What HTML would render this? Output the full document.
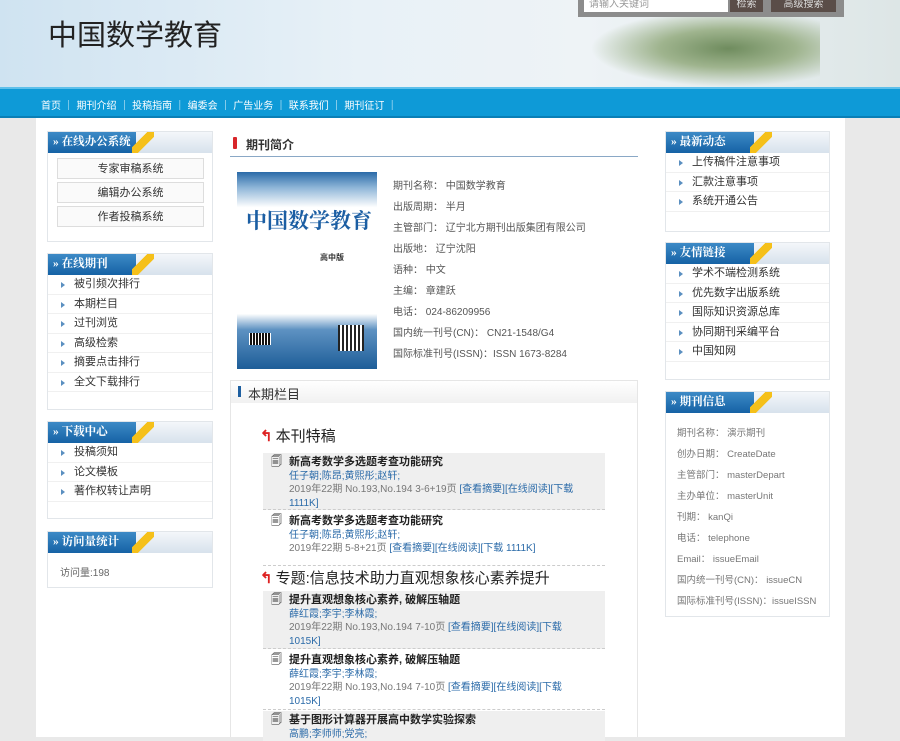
<!DOCTYPE html>
<html><head><meta charset="utf-8"><style>
*{margin:0;padding:0;box-sizing:border-box}
body{width:900px;height:737px;overflow:hidden;background:#e9e9e9;font-family:"Liberation Sans","Noto Sans CJK SC",sans-serif;font-size:11px;color:#555;position:relative}
.a{position:absolute}
#hdr{left:0;top:0;width:900px;height:87px;background:linear-gradient(90deg,#cfe3f1 0%,#e8f1f7 40%,#eef3f6 65%,#dde6e6 100%)}
#tree{left:590px;top:10px;width:230px;height:77px;background:radial-gradient(ellipse at 60% 50%,#6f8c5e 0%,#9fb48e 35%,rgba(220,230,230,0) 70%)}
#nav{left:0;top:87px;width:900px;height:31px;background:#0e9ad7;border-top:2px solid #5fc0ea;border-bottom:2px solid #0a7fb6}
#nav span{position:absolute;top:8px;color:#fff;font-size:10px}
#wrap{left:36px;top:118px;width:809px;height:619px;background:#fff}
.box{position:absolute;border:1px solid #e2e6ea;background:#fff}
.bh{height:21px;background:linear-gradient(#f4f7fa,#d7e2ec);position:relative}
.bh b{position:absolute;left:0;top:0;height:21px;width:88px;background:linear-gradient(#3d8ac6,#1562a5);color:#fff;font-size:11.5px;line-height:21px;padding-left:5px;white-space:nowrap;font-family:"Liberation Serif","Noto Serif CJK SC",serif}
.bh i{position:absolute;left:84px;top:0;width:22px;height:21px;background:linear-gradient(135deg,transparent 35%,#f5c01a 36%,#f5c01a 62%,transparent 63%)}
.li{position:relative;height:19.5px;line-height:19px;padding-left:26px;color:#333;border-bottom:1px solid #f0f0f0}
.li:before{content:"";position:absolute;left:13px;top:7px;border-left:4px solid #5a8fc0;border-top:3px solid transparent;border-bottom:3px solid transparent}
.btn{margin:3px 8px 0 9px;height:21px;border:1px solid #ddd;text-align:center;line-height:20px;color:#333;background:#fafafa}
.info{position:absolute;left:393px;color:#555;font-size:10px}
.art{position:absolute;left:263px;width:342px;font-size:10px;line-height:13.5px;padding-left:26px;padding-right:24px;border-bottom:1px dashed #ccc}
.art.g{background:#efefef}
.art .t{font-weight:bold;color:#222;font-size:11px;margin-top:3px;white-space:nowrap}
.art .t:before{content:"🗐";position:absolute;left:8px;font-weight:normal;color:#333;font-size:11px}
.art .au{color:#2a6aa8}
.art .in{color:#777}
.art .in a{color:#2a6aa8}
.sh{position:absolute;left:260px;font-size:15px;color:#222}
.sh:before{content:"↰";color:#d22;font-weight:bold;margin-right:3px}
.ri{position:absolute;left:677px;font-size:9.5px;color:#777}
</style></head><body>
<div id="hdr" class="a"></div>
<div id="tree" class="a"></div>
<div class="a" style="left:48px;top:12px;font-size:29px;color:#222;font-family:'Noto Sans CJK SC',sans-serif">中国数学教育</div>
<div class="a" style="left:578px;top:0;width:266px;height:17px;background:#8c8c8c"></div>
<div class="a" style="left:584px;top:0;width:144px;height:12px;background:#fff;color:#999;font-size:10px;line-height:9px;padding-left:5px">请输入关键词</div>
<div class="a" style="left:730px;top:0;width:33px;height:12px;background:#5a4d48;color:#ddd;font-size:10px;line-height:9px;text-align:center">检索</div>
<div class="a" style="left:771px;top:0;width:65px;height:12px;background:#5a4d48;color:#ddd;font-size:10px;line-height:9px;text-align:center">高级搜索</div>
<div id="nav" class="a">
<span style="left:41px">首页 ｜ 期刊介绍 ｜ 投稿指南 ｜ 编委会 ｜ 广告业务 ｜ 联系我们 ｜ 期刊征订 ｜</span>
</div>
<div id="wrap" class="a"></div>

<div class="box" style="left:47px;top:131px;width:166px;height:111px"><div class="bh"><b>» 在线办公系统</b><i></i></div>
<div class="btn" style="margin-top:5px">专家审稿系统</div><div class="btn">编辑办公系统</div><div class="btn">作者投稿系统</div></div>
<div class="box" style="left:47px;top:253px;width:166px;height:157px"><div class="bh"><b>» 在线期刊</b><i></i></div>
<div class="li">被引频次排行</div><div class="li">本期栏目</div><div class="li">过刊浏览</div><div class="li">高级检索</div><div class="li">摘要点击排行</div><div class="li">全文下载排行</div></div>
<div class="box" style="left:47px;top:421px;width:166px;height:98px"><div class="bh"><b>» 下载中心</b><i></i></div>
<div class="li">投稿须知</div><div class="li">论文模板</div><div class="li">著作权转让声明</div></div>
<div class="box" style="left:47px;top:531px;width:166px;height:57px"><div class="bh"><b>» 访问量统计</b><i></i></div>
<div style="padding:11px 0 0 12px;font-size:10px;color:#666">访问量:198</div></div>

<div class="a" style="left:233px;top:137px;width:4px;height:12px;background:#d8262a;border-radius:1px"></div>
<div class="a" style="left:246px;top:136px;font-size:12px;font-weight:bold;color:#333">期刊简介</div>
<div class="a" style="left:230px;top:156px;width:408px;height:1px;background:#8aa8c6"></div>
<div class="a" style="left:237px;top:172px;width:140px;height:197px;background:linear-gradient(#2a6aa8 0%,#8fb6d8 8%,#fff 18%,#fff 72%,#5e92c2 80%,#1d5d98 100%)"></div>
<div class="a" style="left:246px;top:205px;font-size:21px;color:#1b5ea3;font-weight:bold;font-family:'Noto Serif CJK SC',serif;white-space:nowrap">中国数学教育</div>
<div class="a" style="left:320px;top:252px;font-size:8px;color:#333;font-weight:bold">高中版</div>
<div class="a" style="left:338px;top:325px;width:26px;height:26px;background:repeating-linear-gradient(90deg,#222 0 2px,#fff 2px 4px)"></div>
<div class="a" style="left:249px;top:333px;width:22px;height:12px;background:repeating-linear-gradient(90deg,#fff 0 1px,#111 1px 3px)"></div>
<div class="info" style="top:177px">期刊名称： 中国数学教育</div>
<div class="info" style="top:198px">出版周期： 半月</div>
<div class="info" style="top:219px">主管部门： 辽宁北方期刊出版集团有限公司</div>
<div class="info" style="top:240px">出版地： 辽宁沈阳</div>
<div class="info" style="top:261px">语种： 中文</div>
<div class="info" style="top:282px">主编： 章建跃</div>
<div class="info" style="top:303px">电话： 024-86209956</div>
<div class="info" style="top:324px">国内统一刊号(CN)： CN21-1548/G4</div>
<div class="info" style="top:345px">国际标准刊号(ISSN)：ISSN 1673-8284</div>

<div class="a" style="left:230px;top:380px;width:408px;height:357px;border:1px solid #e6e6e6;border-bottom:none"></div>
<div class="a" style="left:231px;top:381px;width:406px;height:22px;background:linear-gradient(#fff,#f1f1f1)"></div>
<div class="a" style="left:238px;top:386px;width:3px;height:11px;background:#1e5fa0"></div>
<div class="a" style="left:248px;top:384px;font-size:13px;color:#333">本期栏目</div>
<div class="sh" style="top:425px">本刊特稿</div>
<div class="art g" style="top:453px;height:57px"><div class="t">新高考数学多选题考查功能研究</div><div class="au">任子朝;陈昂;黄熙彤;赵轩;</div><div class="in">2019年22期 No.193,No.194 3-6+19页 <a>[查看摘要][在线阅读][下载 1111K]</a></div></div>
<div class="art" style="top:512px;height:54px"><div class="t">新高考数学多选题考查功能研究</div><div class="au">任子朝;陈昂;黄熙彤;赵轩;</div><div class="in">2019年22期 5-8+21页 <a>[查看摘要][在线阅读][下载 1111K]</a></div></div>
<div class="sh" style="top:567px">专题:信息技术助力直观想象核心素养提升</div>
<div class="art g" style="top:591px;height:58px"><div class="t">提升直观想象核心素养, 破解压轴题</div><div class="au">薛红霞;李宇;李林霞;</div><div class="in">2019年22期 No.193,No.194 7-10页 <a>[查看摘要][在线阅读][下载 1015K]</a></div></div>
<div class="art" style="top:651px;height:59px"><div class="t">提升直观想象核心素养, 破解压轴题</div><div class="au">薛红霞;李宇;李林霞;</div><div class="in">2019年22期 No.193,No.194 7-10页 <a>[查看摘要][在线阅读][下载 1015K]</a></div></div>
<div class="art g" style="top:711px;height:30px;border:none"><div class="t">基于图形计算器开展高中数学实验探索</div><div class="au">高鹏;李师师;党亮;</div></div>

<div class="box" style="left:665px;top:131px;width:165px;height:101px"><div class="bh"><b>» 最新动态</b><i></i></div>
<div class="li">上传稿件注意事项</div><div class="li">汇款注意事项</div><div class="li">系统开通公告</div></div>
<div class="box" style="left:665px;top:242px;width:165px;height:138px"><div class="bh"><b>» 友情链接</b><i></i></div>
<div class="li">学术不端检测系统</div><div class="li">优先数字出版系统</div><div class="li">国际知识资源总库</div><div class="li">协同期刊采编平台</div><div class="li">中国知网</div></div>
<div class="box" style="left:665px;top:391px;width:165px;height:226px"><div class="bh"><b>» 期刊信息</b><i></i></div></div>
<div class="ri" style="top:425px">期刊名称： 演示期刊</div>
<div class="ri" style="top:446px">创办日期： CreateDate</div>
<div class="ri" style="top:467px">主管部门： masterDepart</div>
<div class="ri" style="top:488px">主办单位： masterUnit</div>
<div class="ri" style="top:509px">刊期： kanQi</div>
<div class="ri" style="top:530px">电话： telephone</div>
<div class="ri" style="top:551px">Email： issueEmail</div>
<div class="ri" style="top:572px">国内统一刊号(CN)： issueCN</div>
<div class="ri" style="top:593px">国际标准刊号(ISSN)：issueISSN</div>
</body></html>
